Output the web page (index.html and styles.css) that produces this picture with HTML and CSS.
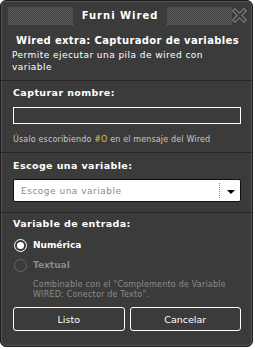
FILE: index.html
```html
<!DOCTYPE html>
<html>
<head>
<meta charset="utf-8">
<link rel="stylesheet" href="styles.css">
</head>
<body>
<div class="window">
  <div class="titlebar">
    <div class="dots dots-left"></div>
    <div class="title">Furni Wired</div>
    <div class="dots dots-right"></div>
    <svg class="close" width="15" height="15" viewBox="0 0 15 15">
      <path d="M3 3 L12 12 M12 3 L3 12" stroke="#7a7a7a" stroke-width="4.5" stroke-linecap="square" fill="none"/>
      <path d="M3 3 L12 12 M12 3 L3 12" stroke="#3a3a3a" stroke-width="2" stroke-linecap="square" fill="none"/>
    </svg>
  </div>
  <div class="intro">
    <div class="heading">Wired extra: Capturador de variables</div>
    <div class="desc">Permite ejecutar una pila de wired con variable</div>
  </div>
  <div class="section s1">
    <div class="label">Capturar nombre:</div>
    <div class="input"></div>
    <div class="hint">Úsalo escoribiendo <span class="code">#O</span> en el mensaje del Wired</div>
  </div>
  <div class="section s2">
    <div class="label">Escoge una variable:</div>
    <div class="select">
      <span class="placeholder">Escoge una variable</span>
      <span class="sep"></span>
      <span class="arrow"></span>
    </div>
  </div>
  <div class="section s3">
    <div class="label">Variable de entrada:</div>
    <div class="radio-row">
      <span class="radio checked"></span>
      <span class="radio-text">Numérica</span>
    </div>
    <div class="radio-row disabled">
      <span class="radio"></span>
      <span class="radio-text">Textual</span>
    </div>
    <div class="comment">Combinable con el "Complemento de Variable WIRED: Conector de Texto".</div>
    <div class="buttons">
      <div class="btn">Listo</div>
      <div class="btn">Cancelar</div>
    </div>
  </div>
</div>
</body>
</html>
```
FILE: styles.css
```css
html, body {
  margin: 0;
  padding: 0;
  background: #ffffff;
}
body {
  width: 255px;
  height: 349px;
  font-family: "DejaVu Sans", Verdana, sans-serif;
  font-size: 9px;
  color: #ffffff;
}
.window {
  box-sizing: border-box;
  width: 253px;
  height: 347px;
  background: #3b3b3b;
  border: 1px solid #1c1c1c;
  border-radius: 6px;
  box-shadow: inset 0 0 0 1px #555555;
  overflow: hidden;
  display: flex;
  flex-direction: column;
}
.titlebar {
  position: relative;
  height: 29px;
  display: flex;
  align-items: center;
  padding: 0 20px 0 7px;
}
.dots {
  height: 18px;
  flex: 1;
  background: conic-gradient(#636363 25%, transparent 0 50%, #636363 0 75%, transparent 0) 0 0 / 2px 2px;
}
.title {
  font-weight: bold;
  font-size: 10px;
  padding: 0 9px;
  letter-spacing: 1px;
}
.close {
  position: absolute;
  right: 5px;
  top: 7px;
}
.intro {
  padding: 5px 11px 7px 11px;
}
.heading {
  font-weight: bold;
  font-size: 10px;
  line-height: 12px;
  padding-left: 4px;
  margin-bottom: 2px;
  letter-spacing: 0.35px;
  white-space: nowrap;
}
.desc {
  line-height: 12px;
  letter-spacing: 0.45px;
}
.section {
  border-top: 1px solid #282828;
  padding: 0 11px 0 12px;
}
.s1 {
  padding-top: 6px;
  height: 72px;
  box-sizing: border-box;
}
.label {
  font-weight: bold;
  font-size: 9.5px;
  line-height: 12px;
  letter-spacing: 0.4px;
}
.input {
  margin-top: 8px;
  height: 15px;
  border: 1px solid #ffffff;
}
.hint {
  margin-top: 10px;
  font-size: 8px;
  line-height: 12px;
  color: #c8c8c8;
  letter-spacing: 0.15px;
  white-space: nowrap;
}
.code {
  color: #d9c64e;
}
.s2 {
  padding-top: 7px;
  height: 60px;
  box-sizing: border-box;
}
.select {
  margin-top: 7px;
  height: 23px;
  box-sizing: border-box;
  background: #ffffff;
  border: 1px solid #111111;
  border-radius: 2px;
  display: flex;
  align-items: center;
  padding-left: 7px;
}
.placeholder {
  flex: 1;
  color: #8a8a8a;
  letter-spacing: 0.5px;
}
.sep {
  width: 0;
  height: 15px;
  border-left: 1px dotted #888888;
}
.arrow {
  width: 0;
  height: 0;
  border-left: 4px solid transparent;
  border-right: 4px solid transparent;
  border-top: 4px solid #000000;
  margin: 2px 5px 0 7px;
}
.s3 {
  padding-top: 5px;
  flex: 1;
}
.radio-row {
  display: flex;
  align-items: center;
  height: 14px;
  margin-top: 8px;
}
.radio-row + .radio-row {
  margin-top: 6px;
}
.radio {
  box-sizing: border-box;
  width: 13px;
  height: 13px;
  border: 1px solid #ffffff;
  border-radius: 50%;
  margin-left: 1px;
  margin-right: 6px;
  display: flex;
  align-items: center;
  justify-content: center;
}
.radio.checked::after {
  content: "";
  width: 7px;
  height: 7px;
  border-radius: 50%;
  background: #ffffff;
}
.radio-text {
  font-weight: bold;
  font-size: 9px;
}
.disabled .radio {
  border-color: #666666;
}
.disabled .radio-text {
  color: #8a8a8a;
}
.comment {
  margin-top: 8px;
  padding-left: 20px;
  font-size: 8px;
  line-height: 10px;
  color: #8c8c8c;
  letter-spacing: 0.2px;
}
.buttons {
  margin-top: 7px;
  display: flex;
  gap: 5px;
}
.btn {
  flex: 1;
  box-sizing: border-box;
  height: 24px;
  border: 1px solid #ffffff;
  border-radius: 3px;
  display: flex;
  align-items: center;
  justify-content: center;
  font-size: 9.5px;
}
```
